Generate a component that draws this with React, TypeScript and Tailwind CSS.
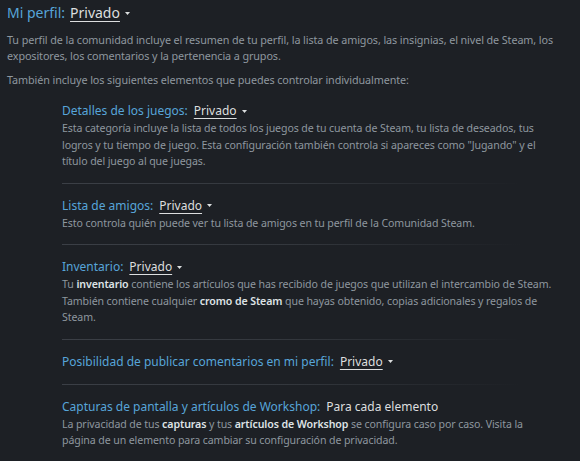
import React from "react";

function Caret() {
  return (
    <svg className="ml-[5px] inline-block" width="5" height="3" viewBox="0 0 5 3">
      <path d="M0 0h5L2.5 3z" fill="#dcdedf" />
    </svg>
  );
}

function Privado({ gap = "ml-[6px]" }: { gap?: string }) {
  return (
    <span className={`${gap} inline-flex items-center text-[#dcdedf]`}>
      <span className="underline underline-offset-[3px] decoration-[#dcdedf]">Privado</span>
      <Caret />
    </span>
  );
}

function Divider() {
  return <div className="h-px bg-gradient-to-r from-[#3b3f46] via-[#33373d] to-transparent mr-[52px]" />;
}

function Section({
  title,
  value,
  children,
  last,
}: {
  title: string;
  value?: React.ReactNode;
  children?: React.ReactNode;
  last?: boolean;
}) {
  return (
    <div>
      <div className={last ? "pt-[13px]" : "pt-[13px] pb-[13px]"}>
        <div className="flex items-center text-[12px] leading-[18px]">
          <span className="text-[#57a5d9]">{title}</span>
          {value ?? <Privado />}
        </div>
        {children && (
          <p className="whitespace-nowrap text-[10.6px] leading-[16.5px] tracking-[-0.1px] text-[#8e979f]">
            {children}
          </p>
        )}
      </div>
      {!last && <Divider />}
    </div>
  );
}

const B = ({ children }: { children: React.ReactNode }) => (
  <span className="font-semibold text-[#dfe3e6]">{children}</span>
);

export default function App() {
  return (
    <div
      className="min-h-[461px] w-[580px] overflow-hidden bg-[#1d2025] px-[7px] pt-[2px]"
      style={{ fontFamily: '"Noto Sans", "Open Sans", sans-serif' }}
    >
      <div className="flex items-center text-[14px] leading-[22px]">
        <span className="text-[#57a5d9]">Mi perfil:</span>
        <Privado gap="ml-[5px]" />
      </div>
      <p className="mt-[8px] text-[10.8px] leading-[16px] tracking-[-0.1px] text-[#8e979f] pr-[6px]">
        Tu perfil de la comunidad incluye el resumen de tu perfil, la lista de amigos, las insignias, el
        nivel de Steam, los expositores, los comentarios y la pertenencia a grupos.
      </p>
      <p className="mt-[8px] text-[10.8px] leading-[16px] tracking-[-0.1px] text-[#8e979f]">
        También incluye los siguientes elementos que puedes controlar individualmente:
      </p>

      <div className="ml-[55px] pt-px">
        <Section title="Detalles de los juegos:">
          Esta categoría incluye la lista de todos los juegos de tu cuenta de Steam, tu lista de deseados, tus
          <br />
          logros y tu tiempo de juego. Esta configuración también controla si apareces como "Jugando" y el
          <br />
          título del juego al que juegas.
        </Section>
        <Section title="Lista de amigos:">
          Esto controla quién puede ver tu lista de amigos en tu perfil de la Comunidad Steam.
        </Section>
        <Section title="Inventario:">
          Tu <B>inventario</B> contiene los artículos que has recibido de juegos que utilizan el intercambio de
          Steam.
          <br />
          También contiene cualquier <B>cromo de Steam</B> que hayas obtenido, copias adicionales y regalos de
          <br />
          Steam.
        </Section>
        <Section title="Posibilidad de publicar comentarios en mi perfil:" />
        <Section
          title="Capturas de pantalla y artículos de Workshop:"
          value={<span className="ml-[6px] text-[#dcdedf]">Para cada elemento</span>}
          last
        >
          La privacidad de tus <B>capturas</B> y tus <B>artículos de Workshop</B> se configura caso por caso.
          Visita la
          <br />
          página de un elemento para cambiar su configuración de privacidad.
        </Section>
      </div>
    </div>
  );
}
